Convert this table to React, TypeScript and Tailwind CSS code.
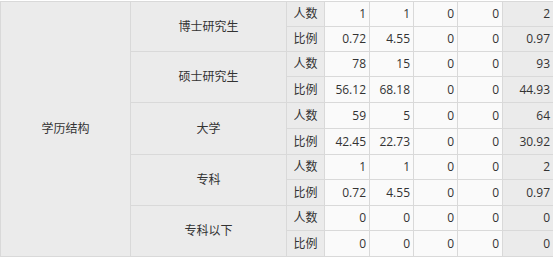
const groups = [
  { name: "博士研究生", count: ["1", "1", "0", "0", "2"], ratio: ["0.72", "4.55", "0", "0", "0.97"] },
  { name: "硕士研究生", count: ["78", "15", "0", "0", "93"], ratio: ["56.12", "68.18", "0", "0", "44.93"] },
  { name: "大学", count: ["59", "5", "0", "0", "64"], ratio: ["42.45", "22.73", "0", "0", "30.92"] },
  { name: "专科", count: ["1", "1", "0", "0", "2"], ratio: ["0.72", "4.55", "0", "0", "0.97"] },
  { name: "专科以下", count: ["0", "0", "0", "0", "0"], ratio: ["0", "0", "0", "0", "0"] },
];

const App = () => {
  return (
    <div className="w-[553px] h-[258px] bg-white overflow-hidden">
      <div
        className="mt-px grid gap-px bg-[#d9d9d9] pt-px pl-px pb-px text-[12px] text-[#333] grid-cols-[129px_155px_37px_44px_43px_43px_44px_50px] grid-rows-[24px_24px_24px_25px_25px_25px_24px_25px_24px_25px]"
        style={{ fontFamily: '"Open Sans", "Noto Sans CJK SC", sans-serif' }}
      >
        {/* left header spanning all rows */}
        <div className="row-span-10 bg-[#ebebeb] flex items-center justify-center">学历结构</div>

        {groups.map((g, i) => (
          <div key={g.name} className="contents">
            <div
              className={`row-span-2 bg-[#ebebeb] flex items-center justify-center ${
                i === 0 ? "row-start-1" : ""
              }`}
              style={{ gridRowStart: i * 2 + 1, gridColumnStart: 2 }}
            >
              {g.name}
            </div>
            {[
              { label: "人数", vals: g.count },
              { label: "比例", vals: g.ratio },
            ].map((r) => (
              <div key={r.label} className="contents">
                <div className="bg-[#ebebeb] flex items-center justify-center">{r.label}</div>
                {r.vals.map((v, j) => (
                  <div
                    key={j}
                    className={`flex items-center justify-end pr-[3px] ${
                      j === 4 ? "bg-[#ebebeb]" : "bg-[#fafafa]"
                    }`}
                  >
                    {v}
                  </div>
                ))}
              </div>
            ))}
          </div>
        ))}
      </div>
    </div>
  );
};

export default App;
